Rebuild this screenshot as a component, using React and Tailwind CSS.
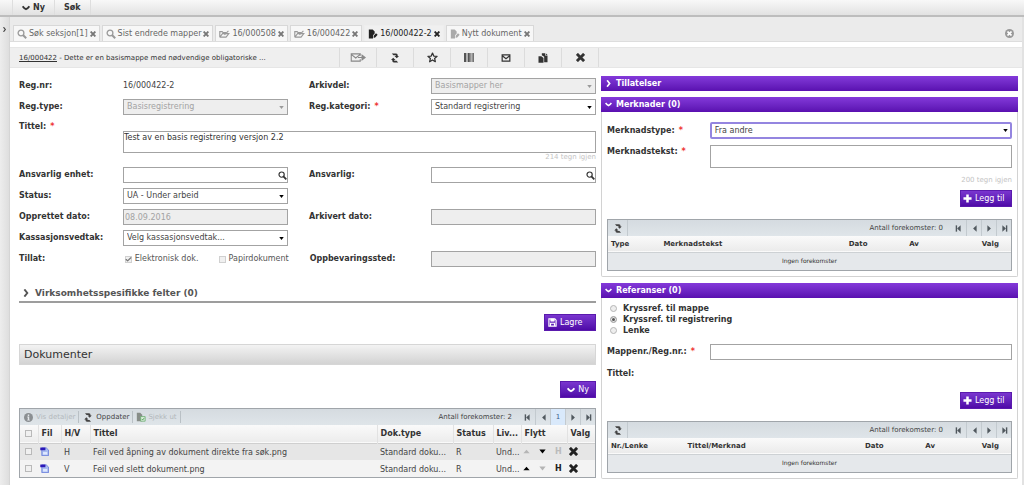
import React from 'react';
import { Check } from 'lucide-react';

const control =
  'w-full h-4 appearance-none rounded-none border border-[#a3a3a3] bg-white outline-none text-[8px] text-[#444] disabled:bg-[#eee] disabled:text-[#a3a3a3] disabled:opacity-100';

function Chevron({ className, down }) {
  return (
    <svg viewBox="0 0 10 10" className={className} fill="none" stroke="currentColor" strokeWidth="2.4">
      <path d={down ? 'M0.8 2.8 Q3 5.6 5 6.4 Q7 5.6 9.2 2.8' : 'M3 0.5 L6.6 5 L3 9.5'} />
    </svg>
  );
}

function Cross({ className }) {
  return (
    <svg viewBox="0 0 10 10" className={className} fill="none" stroke="currentColor" strokeWidth="3.2">
      <path d="M1 1 L9 9 M9 1 L1 9" />
    </svg>
  );
}

function SearchIcon({ className }) {
  return (
    <svg viewBox="0 0 10 10" className={className} fill="none" stroke="currentColor">
      <circle cx="4" cy="4" r="2.9" strokeWidth="1.3" />
      <path d="M6 6 L9.2 9.2" strokeWidth="2" />
    </svg>
  );
}

function Refresh({ className }) {
  return (
    <svg viewBox="0 0 10 12" className={className} fill="currentColor">
      <path d="M1 0.4 H6.4 Q8.4 0.4 8.4 2.6 V3.4 H10 L7.2 6.4 L4.4 3.4 H6 V2.6 H3 Z" />
      <path d="M9 11.6 H3.6 Q1.6 11.6 1.6 9.4 V8.6 H0 L2.8 5.6 L5.6 8.6 H4 V9.4 H7 Z" />
    </svg>
  );
}

function StarIcon({ className }) {
  return (
    <svg viewBox="0 0 12 12" className={className} fill="none" stroke="currentColor" strokeWidth="1.4" strokeLinejoin="round">
      <path d="M6 1.2 L7.4 4.4 L11 4.7 L8.3 7 L9.1 10.6 L6 8.7 L2.9 10.6 L3.7 7 L1 4.7 L4.6 4.4 Z" />
    </svg>
  );
}

function MailIcon({ className }) {
  return (
    <svg viewBox="0 0 12 10" className={className} fill="none" stroke="currentColor" strokeWidth="1.5">
      <path d="M1.2 1.2 H10.8 V8.8 H1.2 Z M1.8 2.6 L6 6 L10.2 2.6" />
    </svg>
  );
}

function FolderIcon({ className }) {
  return (
    <svg viewBox="0 0 14 10" className={className} fill="none" stroke="currentColor" strokeWidth="1.4">
      <path d="M1 9 V2 H4 L5 3 H9 M1 9 H9 L12.5 4.5 H4.5 L1.5 8.5 M7 6 L12 1" />
    </svg>
  );
}

function PageIcon({ className }) {
  return (
    <svg viewBox="0 0 12 12" className={className} fill="currentColor">
      <path d="M1 0.5 H5.6 L8 3 V5.4 L6 7.6 V11.5 H1 Z" />
      <path d="M6.8 8.2 L9.6 5 L11.6 6.8 L9 10 L6.8 10.8 Z" />
    </svg>
  );
}

function PagesIcon({ className }) {
  return (
    <svg viewBox="0 0 12 12" className={className} fill="currentColor">
      <path d="M4.6 0.4 H8.4 V3 H11.4 V11 H7.4 V4.6 L4.6 2.8 Z" />
      <path d="M9.2 0.3 L11.5 2.3 H9.2 Z" />
      <path d="M0.6 3.8 L4 3.8 L6.6 6 V11.8 H0.6 Z" />
    </svg>
  );
}

function SendIcon({ className }) {
  return (
    <svg viewBox="0 0 17 10" className={className} fill="none" stroke="currentColor" strokeWidth="1.2">
      <path d="M11 3 V1 H1 V9 H11 V7 M1 1.5 L6 5.5 L11 1.5 M8.5 5 H13" />
      <path d="M13 2.4 L16.5 5 L13 7.6 Z" fill="currentColor" />
    </svg>
  );
}

function BarcodeIcon({ className }) {
  return (
    <svg viewBox="0 0 10 9" className={className} fill="currentColor">
      <path d="M0 0H2V9H0ZM2.6 0H3.4V9H2.6ZM4 0H5.8V9H4ZM6.4 0H7.2V9H6.4ZM7.8 0H8.6V9H7.8ZM9.2 0H10V9H9.2Z" />
    </svg>
  );
}

function DocIcon({ className }) {
  return (
    <svg viewBox="0 0 10 10" className={className}>
      <path d="M2 1 H7 L9.5 3.4 V9.6 H2 Z" fill="#a9bdf0" stroke="#5a70d8" strokeWidth="0.8" />
      <path d="M0.3 0.6 H6 V3.6 H0.3 Z" fill="#2b18b8" />
      <path d="M3.4 5.6 H8 V8.4 H3.4 Z" fill="#dfe8ff" />
    </svg>
  );
}

function SaveIcon({ className }) {
  return (
    <svg viewBox="0 0 10 10" className={className} fill="none" stroke="currentColor" strokeWidth="1.3">
      <path d="M1 1 H7.6 L9 2.4 V9 H1 Z M2.8 9 V5.8 H7.2 V9" />
      <path d="M3 1 H7 V3.6 H3 Z" fill="currentColor" strokeWidth="0.6" />
    </svg>
  );
}

function Plus() {
  return (
    <svg viewBox="0 0 10 10" className="size-[9px]" fill="none" stroke="currentColor" strokeWidth="2.8">
      <path d="M5 0.5 V9.5 M0.5 5 H9.5" />
    </svg>
  );
}

function Triangle({ className, dir, bar }) {
  const paths = {
    left: 'M8 0.5 V9.5 L3 5 Z',
    right: 'M2 0.5 V9.5 L7 5 Z',
    up: 'M0.5 7.5 H9.5 L5 2.5 Z',
    down: 'M0.5 2 H9.5 L5 8 Z',
  };
  return (
    <svg viewBox="0 0 10 10" className={className} fill="currentColor">
      <path d={paths[dir]} />
      {bar && <path d={dir === 'left' ? 'M1 0.5 H3 V9.5 H1 Z' : 'M7 0.5 H9 V9.5 H7 Z'} />}
    </svg>
  );
}

function Select({ id, value, disabled, focused }) {
  return (
    <div className="grid w-full items-center">
      <select
        id={id}
        disabled={disabled}
        className={
          focused
            ? 'col-start-1 row-start-1 w-full h-[17px] appearance-none rounded-xs border-2 border-[#9485e0] bg-white pl-[3px] text-[8px] text-[#444] outline-none'
            : `${control} col-start-1 row-start-1 pl-[3px]`
        }
      >
        <option>{value}</option>
      </select>
      <Triangle
        dir="down"
        className={`pointer-events-none col-start-1 row-start-1 mr-1 size-[5px] justify-self-end ${disabled ? 'text-[#999]' : 'text-black'}`}
      />
    </div>
  );
}

function SearchInput({ id }) {
  return (
    <div className="grid w-full items-center">
      <input id={id} type="text" className={`${control} col-start-1 row-start-1 pr-3 pl-px`} />
      <SearchIcon className="col-start-1 row-start-1 mr-px size-[9px] justify-self-end text-[#333]" />
    </div>
  );
}

function Label({ htmlFor, children, required }) {
  return (
    <label htmlFor={htmlFor} className="font-bold whitespace-nowrap text-[#333]">
      {children}
      {required && <span className="ml-1 text-[#e33]">*</span>}
    </label>
  );
}

function PurpleButton({ children, className }) {
  return (
    <button
      className={`flex h-[17px] items-center gap-[3px] border border-[#5a1aad] bg-linear-to-b from-[#7a35cf] to-[#4f08a8] text-[8px] text-white ${className}`}
    >
      {children}
    </button>
  );
}

function Tab({ icon, children, active }) {
  return (
    <div
      className={`flex h-4 items-center gap-[2px] border border-b-0 px-[3px] whitespace-nowrap ${
        active ? 'border-[#eee] bg-[#f0f0f0] text-[#222]' : 'border-[#d8d8d8] bg-[#f7f7f7] text-[#666]'
      }`}
    >
      {icon}
      <a href="#" className="pt-px">{children}</a>
      <button aria-label="Lukk" className={active ? 'text-[#222]' : 'text-[#777]'}>
        <Cross className="size-[6px]" />
      </button>
    </div>
  );
}

function Pager({ count, page }) {
  const cell = 'flex h-4 w-[15px] items-center justify-center border-l border-[#c3cacf] text-[#50585e]';
  return (
    <div className="ml-auto flex items-center">
      <span className="mr-2 text-[7px] text-[#444]">Antall forekomster: {count}</span>
      <button aria-label="Første" className="flex h-4 w-[15px] items-center justify-center text-[#50585e]">
        <Triangle dir="left" bar className="size-[7px]" />
      </button>
      <button aria-label="Forrige" className={cell}><Triangle dir="left" className="size-[7px]" /></button>
      {page && <button className="h-4 w-[15px] border-l border-[#c3cacf] bg-[#d9e9fb] text-[7px] text-[#3c5f8d]">{page}</button>}
      <button aria-label="Neste" className={cell}><Triangle dir="right" className="size-[7px]" /></button>
      <button aria-label="Siste" className={cell}><Triangle dir="right" bar className="size-[7px]" /></button>
    </div>
  );
}

const gridToolbar = 'flex h-4 items-center bg-linear-to-b from-[#d5dbe0] to-[#dfe5e9] text-[7px]';

function EmptyTable({ columns }) {
  return (
    <div className="border border-[#a0a5aa] bg-[#e5e8eb]">
      <div className={gridToolbar}>
        <button aria-label="Oppdater" className="flex h-4 w-5 items-center justify-center border-r border-[#c3cacf] text-[#444]">
          <Refresh className="h-[9px] w-2" />
        </button>
        <Pager count="0" />
      </div>
      <table className="w-full table-fixed">
        <thead>
          <tr className="h-4 border-b border-[#cdd1d4] bg-linear-to-b from-[#fafafa] to-[#ebebeb] text-left text-[7px] text-[#333]">
            {columns.map(([name, width]) => (
              <th key={name} className={`pl-[3px] font-bold ${width}`}>{name}</th>
            ))}
          </tr>
        </thead>
        <tbody>
          <tr className="h-[18px]">
            <td colSpan={columns.length} className="text-center text-[6px] text-[#333]">Ingen forekomster</td>
          </tr>
        </tbody>
      </table>
    </div>
  );
}

function PanelTitle({ children, open }) {
  return (
    <button className="flex h-[15px] w-full items-center gap-1 bg-linear-to-b from-[#8439da] to-[#5a0fb0] pl-1 text-[8px] font-bold text-white">
      <Chevron down={open} className="size-[7px]" />
      {children}
    </button>
  );
}

function Panel({ title, children }) {
  return (
    <section>
      <PanelTitle open>{title}</PanelTitle>
      <div className="rounded-b-xs border border-t-0 border-[#d2d2d2] px-[5px] pb-[5px]">{children}</div>
    </section>
  );
}

function CheckBox({ label, checked }) {
  return (
    <label className="flex items-center gap-[3px] whitespace-nowrap text-[#555]">
      <span className="grid size-[7px]">
        <input
          type="checkbox"
          aria-label={label || 'Velg'}
          disabled={!!label}
          defaultChecked={checked}
          className="col-start-1 row-start-1 size-[7px] appearance-none border border-[#b9b9b9] bg-[#f0f0f0] disabled:border-[#d0d0d0]"
        />
        {checked && <Check className="pointer-events-none col-start-1 row-start-1 size-[7px] text-[#777]" strokeWidth={4} />}
      </span>
      {label}
    </label>
  );
}

function Form() {
  const row = 'grid grid-cols-[104fr_165fr_21fr_122fr_165fr] items-center';
  return (
    <form className="flex flex-col gap-[5px]">
      <div className={row}>
        <Label>Reg.nr:</Label>
        <span>16/000422-2</span>
        <span />
        <Label htmlFor="arkivdel">Arkivdel:</Label>
        <Select id="arkivdel" value="Basismapper her" disabled />
      </div>
      <div className={row}>
        <Label htmlFor="regtype">Reg.type:</Label>
        <Select id="regtype" value="Basisregistrering" disabled />
        <span />
        <Label htmlFor="kategori" required>Reg.kategori:</Label>
        <Select id="kategori" value="Standard registrering" />
      </div>
      <div className="grid grid-cols-[104fr_473fr] items-start">
        <div className="pt-[2px]"><Label htmlFor="tittel" required>Tittel:</Label></div>
        <div className="pt-[11px]">
          <textarea
            id="tittel"
            defaultValue="Test av en basis registrering versjon 2.2"
            className="block h-[22px] w-full resize-none border border-[#a3a3a3] pt-px text-[8px] leading-[10px] text-[#333] outline-none"
          />
          <p className="text-right text-[7px] leading-[9px] text-[#c4c4c4]">214 tegn igjen</p>
        </div>
      </div>
      <div className={row}>
        <Label htmlFor="enhet">Ansvarlig enhet:</Label>
        <SearchInput id="enhet" />
        <span />
        <Label htmlFor="ansvarlig">Ansvarlig:</Label>
        <SearchInput id="ansvarlig" />
      </div>
      <div className={row}>
        <Label htmlFor="status">Status:</Label>
        <Select id="status" value="UA - Under arbeid" />
      </div>
      <div className={row}>
        <Label htmlFor="opprettet">Opprettet dato:</Label>
        <input id="opprettet" type="text" disabled defaultValue="08.09.2016" className={`${control} pl-px`} />
        <span />
        <Label htmlFor="arkivert">Arkivert dato:</Label>
        <input id="arkivert" type="text" disabled className={control} />
      </div>
      <div className={row}>
        <Label htmlFor="kassasjon">Kassasjonsvedtak:</Label>
        <Select id="kassasjon" value="Velg kassasjonsvedtak..." />
      </div>
      <div className={row}>
        <Label>Tillat:</Label>
        <div className="flex gap-5 pl-[2px]">
          <CheckBox label="Elektronisk dok." checked />
          <CheckBox label="Papirdokument" />
        </div>
        <span />
        <Label htmlFor="sted">Oppbevaringssted:</Label>
        <input id="sted" type="text" disabled className={control} />
      </div>
    </form>
  );
}

const documents = [
  { kind: 'H', title: 'Feil ved åpning av dokument direkte fra søk.png', up: false, down: true, main: false, bg: 'bg-[#e6e6e6]' },
  { kind: 'V', title: 'Feil ved slett dokument.png', up: true, down: false, main: true, bg: 'bg-[#f3f3f3]' },
];

function DocumentTable() {
  const th = 'truncate border-l border-[#e2e2e2] pl-[3px] font-bold';
  const td = 'truncate pl-[3px] pt-[3px]';
  return (
    <div className="border border-[#a0a5aa]">
      <div className={gridToolbar}>
        <button className="flex h-3 items-center gap-[3px] border-r border-[#b9c0c5] pr-[3px] pl-1 text-[#b3b8bc]">
          <svg viewBox="0 0 10 10" className="size-[9px]">
            <circle cx="5" cy="5" r="5" fill="#8b8f92" />
            <path d="M4.2 1.8 H5.8 V3.2 H4.2 Z M3.6 4 H5.8 V7.4 H6.5 V8.3 H3.6 V7.4 H4.2 V4.9 H3.6 Z" fill="#e3e7ea" />
          </svg>
          Vis detaljer
        </button>
        <button className="flex h-3 items-center gap-1 border-r border-[#b9c0c5] pr-[3px] pl-[5px] text-[#444]">
          <Refresh className="h-[9px] w-2" />
          Oppdater
        </button>
        <button className="flex h-3 items-center gap-[2px] border-r border-[#b9c0c5] pr-[3px] pl-[3px] text-[#b3b8bc]">
          <svg viewBox="0 0 12 12" className="size-[10px]">
            <path d="M1 1 H5 L7.5 3.4 V11 H1 Z" fill="#878d88" />
            <path d="M5.5 5.5 H11 V11 H5.5 Z" fill="#dcefdc" stroke="#6fae74" />
            <path d="M6.8 8.2 L8 9.6 L10 7" fill="none" stroke="#4b9a52" />
          </svg>
          Sjekk ut
        </button>
        <Pager count="2" page="1" />
      </div>
      <table className="w-full table-fixed text-left">
        <thead>
          <tr className="h-[18px] border-b border-[#cfcfcf] bg-linear-to-b from-[#fafafa] to-[#ececec] text-[#333]">
            <th className="w-[18px] pl-[5px]"><CheckBox /></th>
            <th className={`${th} w-[23px]`}>Fil</th>
            <th className={`${th} w-[29px]`}>H/V</th>
            <th className={th}>Tittel</th>
            <th className={`${th} w-[76px]`}>Dok.type</th>
            <th className={`${th} w-[40px]`}>Status</th>
            <th className={`${th} w-[28px]`}>Liv...</th>
            <th className={`${th} w-[46px]`}>Flytt</th>
            <th className={`${th} w-[28px]`}>Valg</th>
          </tr>
        </thead>
        <tbody>
          {documents.map((doc) => (
            <tr key={doc.kind} className={`h-[17px] text-[#444] ${doc.bg}`}>
              <td className="pl-[5px]"><CheckBox /></td>
              <td className="pl-[2px]"><DocIcon className="size-[9px]" /></td>
              <td className={td}>{doc.kind}</td>
              <td className={td}>{doc.title}</td>
              <td className={td}>Standard doku...</td>
              <td className={td}>R</td>
              <td className={td}>Und...</td>
              <td className="pl-[2px]">
                <div className="flex items-center gap-[9px]">
                  <button aria-label="Opp" className={doc.up ? 'text-black' : 'text-[#b5b5b5]'}><Triangle dir="up" className="size-[7px]" /></button>
                  <button aria-label="Ned" className={doc.down ? 'text-black' : 'text-[#b5b5b5]'}><Triangle dir="down" className="size-[7px]" /></button>
                  <button className={`font-bold ${doc.main ? 'text-[#222]' : 'text-[#bbb]'}`}>H</button>
                </div>
              </td>
              <td className="pl-[2px]">
                <button aria-label="Slett" className="block text-[#222]"><Cross className="size-[9px]" /></button>
              </td>
            </tr>
          ))}
        </tbody>
      </table>
    </div>
  );
}

function Toolbar() {
  const actions = [
    ['Send', <SendIcon className="h-[9px] w-4 text-[#888]" />],
    ['Oppdater', <Refresh className="h-[10px] w-2" />],
    ['Favoritt', <StarIcon className="size-[11px]" />],
    ['Strekkode', <BarcodeIcon className="h-[9px] w-[10px] text-[#555]" />],
    ['E-post', <MailIcon className="h-2 w-[10px]" />],
    ['Kopier', <PagesIcon className="size-[10px]" />],
    ['Slett', <Cross className="size-[9px]" />],
  ];
  return (
    <div className="flex h-[21px] items-center border-y border-[#e6e6e6] bg-[#efefef]">
      <p className="w-[329px] truncate pl-[9px] text-[7px] text-[#333]">
        <a href="#" className="underline">16/000422</a> - Dette er en basismappe med nødvendige obligatoriske ...
      </p>
      <div className="flex border-r border-[#dcdcdc]">
        {actions.map(([name, icon]) => (
          <button key={name} aria-label={name} className="flex h-[19px] w-[37px] items-center justify-center border-l border-[#dcdcdc] text-[#333]">
            {icon}
          </button>
        ))}
      </div>
    </div>
  );
}

function App() {
  const fieldRow = 'grid grid-cols-[103fr_303fr]';
  return (
    <div className="flex min-h-screen flex-col bg-white font-['DejaVu_Sans',Verdana,sans-serif] text-[8px] leading-[10px] text-[#444]">
      <header className="flex h-[17px] border-b-2 border-[#bdbdbd] bg-linear-to-b from-[#f8f8f8] to-[#e2e2e2] pl-3 font-bold text-[#333]">
        <button className="flex items-center gap-[3px] border-x border-[#dedede] px-[9px]">
          <Chevron down className="size-2" />
          Ny
        </button>
        <button className="border-r border-[#dedede] px-[9px]">Søk</button>
      </header>
      <div className="flex flex-1">
        <aside className="w-[10px] border-r border-[#d5d5d5] bg-linear-to-r from-[#ededed] to-[#dedede] pt-[10px]">
          <button aria-label="Vis meny" className="ml-[2px] block"><Chevron className="size-[5px] text-[#444]" /></button>
        </aside>
        <main className="min-w-0 flex-1 border-r-2 border-[#e2e2e2]">
          <nav className="flex items-end gap-[2px] border-b border-[#ddd] bg-[#ebebeb] pt-2 pl-[3px]">
            <Tab icon={<SearchIcon className="size-[10px] text-[#999]" />}>Søk seksjon[1]</Tab>
            <Tab icon={<SearchIcon className="size-[10px] text-[#999]" />}>Sist endrede mapper</Tab>
            <Tab icon={<FolderIcon className="h-2 w-[11px] text-[#999]" />}>16/000508</Tab>
            <Tab icon={<FolderIcon className="h-2 w-[11px] text-[#999]" />}>16/000422</Tab>
            <Tab active icon={<PageIcon className="size-[10px] text-[#222]" />}>16/000422-2</Tab>
            <Tab icon={<PageIcon className="size-[10px] text-[#aaa]" />}>Nytt dokument</Tab>
            <button aria-label="Lukk alle" className="mr-2 mb-[3px] ml-auto flex size-[9px] items-center justify-center rounded-full bg-[#999] text-white">
              <Cross className="size-[5px]" />
            </button>
          </nav>
          <div className="mt-[5px]"><Toolbar /></div>

          <div className="grid grid-cols-[577fr_417fr] gap-[5px] pr-1 pl-[9px]">
            <div className="pt-[10px]">
              <Form />
              <button className="mt-[18px] flex w-full items-center gap-[5px] border-b-2 border-[#9d9d9d] pt-[3px] pb-[3px] pl-[3px] text-[9px] font-bold text-[#555]">
                <Chevron className="size-2" />
                Virksomhetsspesifikke felter (0)
              </button>
              <div className="mt-[11px] flex justify-end">
                <PurpleButton className="w-[52px] pl-[3px]"><SaveIcon className="size-[9px]" />Lagre</PurpleButton>
              </div>
              <h2 className="mt-[13px] flex h-[21px] items-center border border-[#d6d6d6] bg-linear-to-b from-[#f3f3f3] to-[#d3d3d3] pl-1 text-[11px] text-[#333]">
                Dokumenter
              </h2>
              <div className="mt-4 flex justify-end">
                <PurpleButton className="w-9 justify-center"><Chevron down className="size-2" />Ny</PurpleButton>
              </div>
              <div className="mt-[10px]"><DocumentTable /></div>
            </div>

            <div className="flex flex-col gap-[6px] pt-2">
              <PanelTitle>Tillatelser</PanelTitle>
              <Panel title="Merknader (0)">
                <div className={`${fieldRow} items-center pt-[10px]`}>
                  <Label htmlFor="merknadstype" required>Merknadstype:</Label>
                  <Select id="merknadstype" value="Fra andre" focused />
                </div>
                <div className={`${fieldRow} items-start pt-[6px]`}>
                  <div className="pt-[2px]"><Label htmlFor="merknadstekst" required>Merknadstekst:</Label></div>
                  <textarea id="merknadstekst" className="block h-[23px] w-full resize-none border border-[#a3a3a3] outline-none" />
                </div>
                <p className="pt-[7px] text-right text-[7px] text-[#c4c4c4]">200 tegn igjen</p>
                <div className="flex justify-end pt-[5px] pb-3">
                  <PurpleButton className="w-[52px] pl-[2px]"><Plus />Legg til</PurpleButton>
                </div>
                <EmptyTable columns={[['Type', 'w-[13%]'], ['Merknadstekst', 'w-[46%]'], ['Dato', 'w-[15%]'], ['Av', 'w-[18%]'], ['Valg', 'w-[8%]']]} />
              </Panel>
              <Panel title="Referanser (0)">
                <fieldset className="flex flex-col pt-[5px] font-bold text-[#333]">
                  {['Kryssref. til mappe', 'Kryssref. til registrering', 'Lenke'].map((text, i) => (
                    <label key={text} className="flex items-center gap-[6px] pl-[3px] leading-[11px]">
                      <input
                        type="radio"
                        name="reftype"
                        defaultChecked={i === 1}
                        className="size-[7px] appearance-none rounded-full border border-[#b5b5b5] bg-[#eee] checked:bg-[#555] checked:shadow-[inset_0_0_0_1px_#eee]"
                      />
                      {text}
                    </label>
                  ))}
                </fieldset>
                <div className={`${fieldRow} items-center pt-2`}>
                  <Label htmlFor="mappenr" required>Mappenr./Reg.nr.:</Label>
                  <input id="mappenr" type="text" className={control} />
                </div>
                <p className="pt-[9px] font-bold text-[#333]">Tittel:</p>
                <div className="flex justify-end pt-[13px] pb-3">
                  <PurpleButton className="w-[52px] pl-[2px]"><Plus />Legg til</PurpleButton>
                </div>
                <EmptyTable columns={[['Nr./Lenke', 'w-[19%]'], ['Tittel/Merknad', 'w-[44%]'], ['Dato', 'w-[15%]'], ['Av', 'w-[14%]'], ['Valg', 'w-[8%]']]} />
              </Panel>
            </div>
          </div>
        </main>
      </div>
    </div>
  );
}

export default App;
